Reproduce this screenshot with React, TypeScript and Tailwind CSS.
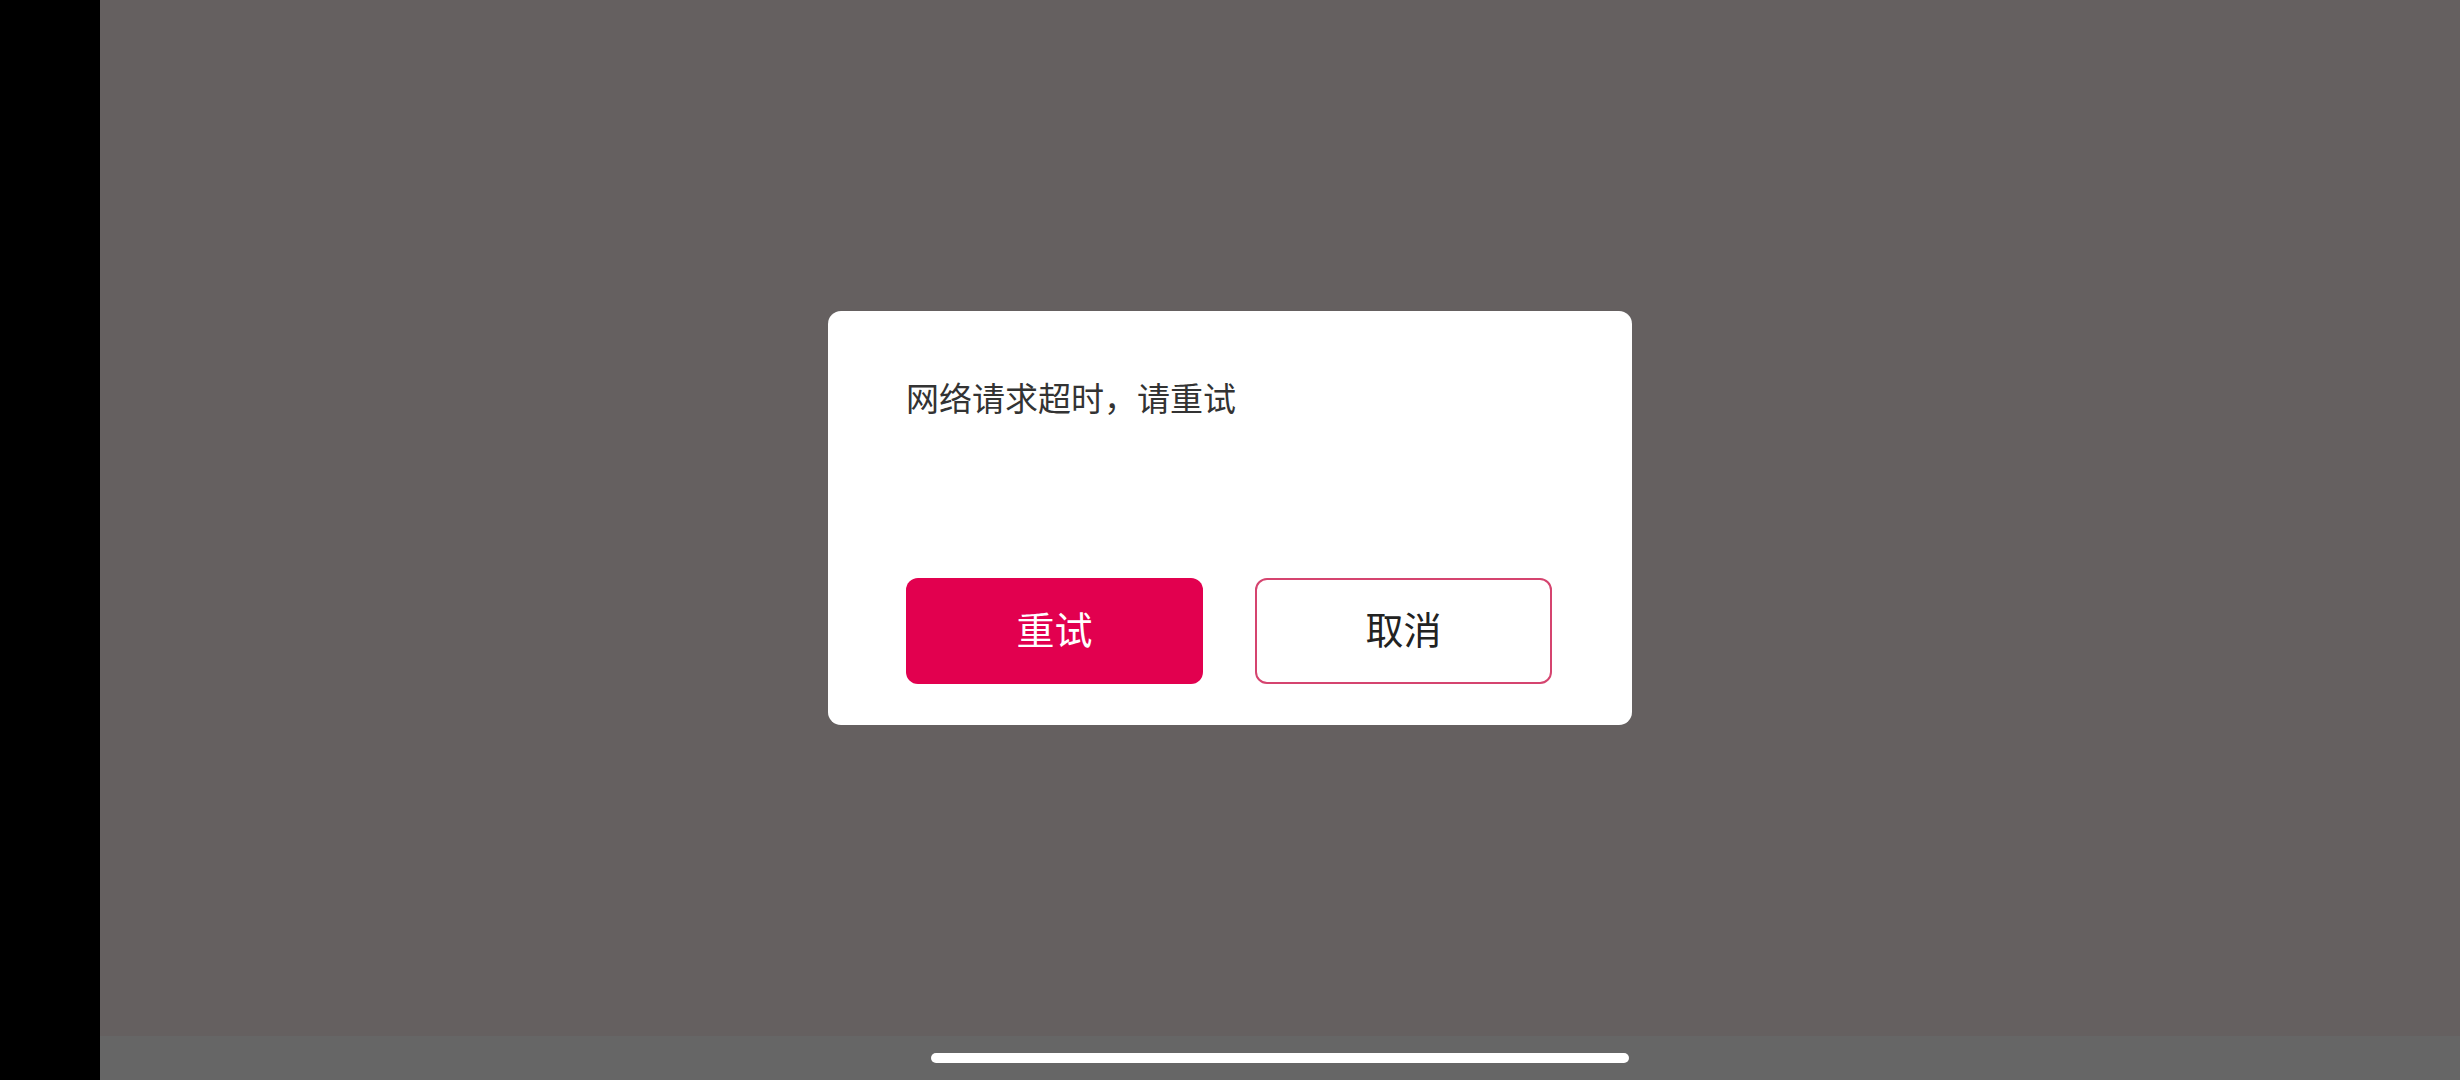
import * as React from 'react'

export default function App() {
  return (
    <div
      className="flex h-[1080px] w-[2460px] overflow-hidden bg-black"
      style={{ fontFamily: '"Noto Sans CJK SC", "Noto Sans", sans-serif' }}
    >
      {/* left black strip */}
      <div className="w-[100px] shrink-0 bg-black" />

      <div className="flex flex-1 flex-col">
        <div className="flex-1 bg-[#656060]" />
        {/* navigation bar */}
        <div className="flex h-[44px] items-start justify-center bg-[#666666] pt-[17px]">
          <div className="h-[10px] w-[698px] rounded-full bg-white" />
        </div>
      </div>

      {/* modal dialog */}
      <div className="fixed inset-x-0 top-0 bottom-[44px] flex items-center justify-center">
        <div className="flex h-[414px] w-[804px] flex-col justify-between rounded-[13px] bg-white pt-[62px] pb-[41px] pl-[78px] pr-[80px]">
          <p className="text-[33px] leading-[48px] text-[#333333]">网络请求超时，请重试</p>
          <div className="flex gap-[52px]">
            <button
              type="button"
              className="flex h-[106px] w-[297px] items-center justify-center rounded-[12px] bg-[#e2004f] pb-[8px] text-[38px] text-white"
            >
              重试
            </button>
            <button
              type="button"
              className="flex h-[106px] w-[297px] items-center justify-center rounded-[12px] border-2 border-[#d5446f] bg-white pb-[8px] text-[38px] text-[#222222]"
            >
              取消
            </button>
          </div>
        </div>
      </div>
    </div>
  )
}
